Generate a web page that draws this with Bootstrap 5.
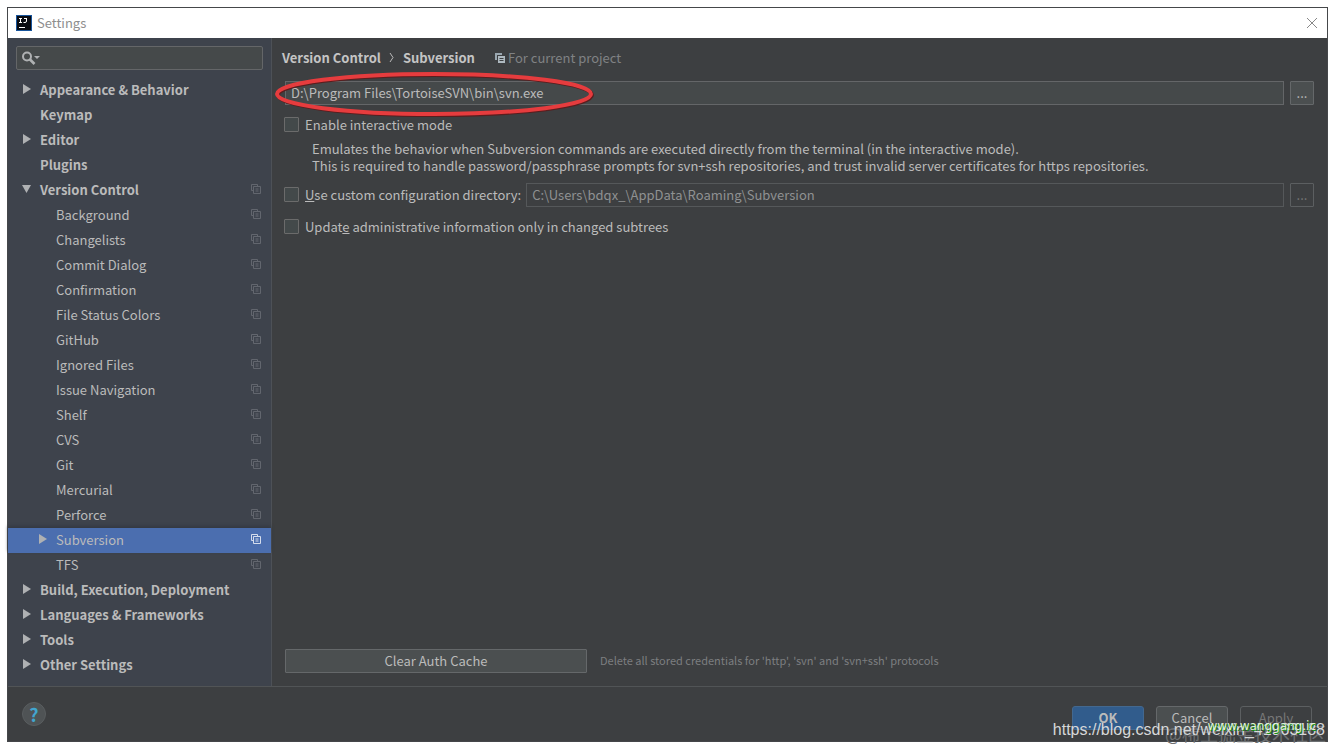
<!DOCTYPE html>
<html lang="en" data-bs-theme="dark">
<head>
<meta charset="utf-8">
<meta name="viewport" content="width=device-width, initial-scale=1">
<title>Settings</title>
<link href="https://cdn.jsdelivr.net/npm/bootstrap@5.3.0/dist/css/bootstrap.min.css" rel="stylesheet">
<style>
  body { background: #fff; color: #bbb; font: 13px/17px "Noto Sans CJK SC", "Noto Sans", sans-serif; padding: 7px; }
  .dialog { background: #3d3f41; border: 1px solid #45474a; }
  .titlebar { background: #fff; color: #8e8e8e; height: 30px; padding: 0 8px; }
  .titlebar span { padding: 0 0 2px 1px; }
  .titlebar button { color: #888; line-height: 0; }
  .sidebar { width: 264px; background: #3e434c; border-right: 1px solid #4d5157; }
  .search { height: 24px; margin: 8px; background: #45494a; border: 1px solid #646668; border-radius: 2px; padding: 0 5px; }
  .search input { min-width: 0; outline: 0; }
  .tree a { height: 25px; padding: 0 10px 3px 14px; color: #bbb; text-decoration: none; }
  .tree .arrow { width: 18px; height: 10px; flex: none; fill: #afb1b3; }
  .tree .group { font-weight: 700; }
  .tree .child { padding-left: 30px; }
  .tree .copy { margin-left: auto; color: #62666e; }
  .tree .active { background: #4b6eaf; box-shadow: 0 -2px 3px #343942; }
  .tree .active .copy { color: #d5dded; }
  .pane { padding: 11px 13px 13px 12px; }
  .crumbs { height: 17px; margin: 0 0 15px -2px; gap: 8px; }
  .crumbs b { color: #c4c4c4; }
  .scope { color: #808284; margin-left: 12px; gap: 3px; }
  .field { height: 24px; min-width: 0; background: #45494a; border: 1px solid #646668; color: #bbb; padding: 0 5px 2px; outline: 0; }
  .path-row, .foot-row { margin-left: 1px; }
  .field:disabled { background: #3d3f41; border-color: #55585a; color: #8f9192; }
  .push { height: 24px; background: #4b4f50; border: 1px solid #65686a; border-radius: 1px; color: #bbb; padding: 0 0 2px; }
  .push:disabled { background: #3d3f41; border-color: #5c5f61; color: #777; }
  .dots { width: 24px; margin-left: 6px; flex: none; }
  .tick { appearance: none; width: 15px; height: 15px; margin: 0 6px 0 0; flex: none; background: #43494a; border: 1px solid #6b6b6b; border-radius: 1px; }
  .option { height: 24px; }
  .custom { margin: 9px 0 7px; }
  .custom label { padding-bottom: 2px; }
  .path-row { margin-bottom: 7px; }
  .hint { padding-left: 28px; margin: 4px 0 0; }
  .custom .field { margin-left: 5px; }
  .clear { width: 302px; }
  .note { font-size: 11px; color: #7c7e80; margin-left: 13px; padding-bottom: 2px; }
  .ring { left: -11px; top: -11px; width: 322px; height: 48px; pointer-events: none; }
  .foot { border-top: 1px solid #515456; height: 55px; padding: 0 15px 0 14px; }
  .help { width: 24px; height: 24px; border-radius: 50%; background: #4f5355; border: 1px solid #595d5f; color: #42a5cf; font-size: 18px; line-height: 20px; padding: 0; }
  .foot .push { width: 72px; border-radius: 3px; }
  .foot .ok { background: #315c8c; border-color: #43688f; font-weight: 700; }
  .actions { gap: 12px; margin-top: 8px; }
  .stamp { white-space: nowrap; pointer-events: none; }
  .stamp-url { right: 10px; bottom: 10px; font: 16px/18px "Liberation Sans", sans-serif; color: #d6d8d9; }
  .stamp-site { right: 19px; bottom: 16px; font: 12px/14px "DejaVu Sans", sans-serif; color: #e0f0dc; text-shadow: 1px 1px 0 #149014; }
  .stamp-forum { right: 9px; bottom: 5px; font-size: 18px; line-height: 22px; color: #6d7072; }
</style>
</head>
<body class="min-vh-100 d-flex position-relative">
<svg class="d-none">
  <symbol id="copy" viewBox="0 0 10 10"><path d="M3 6.500H.5v-6h6V2M2.500 2.500h7v7h-7zM4.500 5h3M4.500 7h3" fill="none" stroke="currentColor"/></symbol>
</svg>
<div class="dialog flex-grow-1 d-flex flex-column">
  <header class="titlebar d-flex align-items-center">
    <svg width="16" height="16" class="me-1"><path fill="#17549b" d="M0 0h16v16H0z"/><path fill="#080b12" d="M1 1h14v14H1z"/><path d="M3 3.500h3M4.500 3v5M3 7.500h3M8 3.500h3M10.500 3v3q0 1.500-1.500 1.500H7.500M3 12.500h6" fill="none" stroke="#fff"/></svg>
    <span>Settings</span>
    <button class="btn border-0 p-0 ms-auto" aria-label="Close"><svg width="13" height="12"><path d="M1 1l10 10M11 1L1 11" stroke="currentColor"/></svg></button>
  </header>
  <div class="d-flex flex-grow-1">
    <aside class="sidebar flex-shrink-0">
      <label class="search d-flex align-items-center">
        <svg width="20" height="14" class="flex-shrink-0"><circle cx="5" cy="5.500" r="4" fill="none" stroke="#afb1b3" stroke-width="2"/><path d="M7.500 8l5 5" stroke="#afb1b3" stroke-width="2.600"/><path d="M12 5h6l-3 3z" fill="#afb1b3"/></svg>
        <input type="text" class="bg-transparent border-0 w-100 text-reset p-0" aria-label="Search settings">
      </label>
      <nav class="tree" id="tree" aria-label="Settings categories"></nav>
    </aside>
    <main class="pane flex-grow-1 d-flex flex-column">
      <div class="crumbs d-flex align-items-center">
        <b>Version Control</b>
        <svg width="6" height="11"><path d="M1 1l3 4.500L1 10" fill="none" stroke="#bbb"/></svg>
        <b>Subversion</b>
        <span class="scope d-flex align-items-center"><svg width="10" height="10"><path d="M0 0h7v2H2v5H0z" fill="#9aa7b0"/><path d="M3 3h7v7H3z" fill="#aeb9c0"/><path d="M4.500 5.500h4M4.500 7.500h4" stroke="#3c3f41"/></svg>For current project</span>
      </div>
      <div class="path-row d-flex position-relative">
        <input type="text" class="field flex-grow-1" value="D:\Program Files\TortoiseSVN\bin\svn.exe" aria-label="Path to Subversion executable">
        <button class="push dots">...</button>
        <svg class="ring position-absolute" viewBox="0 0 322 48"><ellipse cx="161" cy="25" rx="157" ry="20" fill="none" stroke="#5b1d1e" stroke-width="4"/><ellipse cx="160" cy="24" rx="157" ry="20" fill="none" stroke="#e63c3e" stroke-width="4"/></svg>
      </div>
      <label class="option d-flex align-items-center"><input type="checkbox" class="tick">Enable interactive mode</label>
      <p class="hint">Emulates the behavior when Subversion commands are executed directly from the terminal (in the interactive mode).<br>This is required to handle password/passphrase prompts for svn+ssh repositories, and trust invalid server certificates for https repositories.</p>
      <div class="custom d-flex align-items-center">
        <label class="d-flex align-items-center"><input type="checkbox" class="tick"><span><u>U</u>se custom configuration directory:</span></label>
        <input type="text" class="field flex-grow-1" disabled value="C:\Users\bdqx_\AppData\Roaming\Subversion" aria-label="Configuration directory">
        <button class="push dots" disabled>...</button>
      </div>
      <label class="option d-flex align-items-center"><input type="checkbox" class="tick"><span>Updat<u>e</u> administrative information only in changed subtrees</span></label>
      <div class="foot-row mt-auto d-flex align-items-center">
        <button class="push clear">Clear Auth Cache</button>
        <span class="note">Delete all stored credentials for 'http', 'svn' and 'svn+ssh' protocols</span>
      </div>
    </main>
  </div>
  <footer class="foot d-flex align-items-center justify-content-between">
    <button class="help fw-bold" aria-label="Help">?</button>
    <div class="actions d-flex">
      <button class="push ok">OK</button>
      <button class="push">Cancel</button>
      <button class="push" disabled>Apply</button>
    </div>
  </footer>
</div>
<div class="stamp stamp-forum position-absolute" lang="zh-CN">@稀土掘金技术社区</div>
<div class="stamp stamp-url position-absolute">https://blog.csdn.net/weixin_41963188</div>
<div class="stamp stamp-site position-absolute">www.wanggang.ic</div>
<script>
  // Each entry: label, arrow ("r" closed, "d" open, "" none), nested, per-project mark
  const items = [
    ["Appearance & Behavior", "r"], ["Keymap", ""], ["Editor", "r"], ["Plugins", ""], ["Version Control", "d", 0, 1],
    ..."Background,Changelists,Commit Dialog,Confirmation,File Status Colors,GitHub,Ignored Files,Issue Navigation,Shelf,CVS,Git,Mercurial,Perforce".split(",").map(t => [t, "", 1, 1]),
    ["Subversion", "r", 1, 1], ["TFS", "", 1, 1],
    ["Build, Execution, Deployment", "r"], ["Languages & Frameworks", "r"], ["Tools", "r"], ["Other Settings", "r"]
  ];
  const arrows = { r: '<path d="M1 0v10l8-5z"/>', d: '<path d="M0 1h9L4.500 9z"/>', "": "" };
  document.getElementById("tree").innerHTML = items.map(([text, arrow, nested, mark]) =>
    `<a href="#" class="d-flex align-items-center ${nested ? "child" : "group"} ${text === "Subversion" ? "active" : ""}">
      <svg class="arrow">${arrows[arrow]}</svg><span>${text.replace("&", "&amp;")}</span>
      ${mark ? '<svg class="copy" width="10" height="10"><use href="#copy"/></svg>' : ""}</a>`).join("");
</script>
<script src="https://cdn.jsdelivr.net/npm/bootstrap@5.3.0/dist/js/bootstrap.bundle.min.js"></script>
</body>
</html>
